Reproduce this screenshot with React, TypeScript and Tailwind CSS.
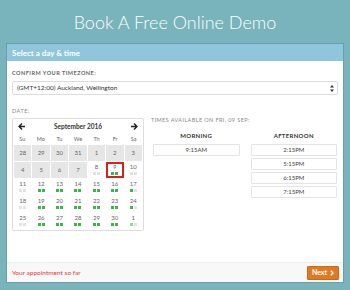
import React from 'react'

type Day = { n: number; bg?: boolean; dots?: string[]; selected?: boolean }

const G = '#3cb54a'
const L = '#e3e3e3'
const LG = '#93d59c'

const weeks: Day[][] = [
  [28, 29, 30, 31, 1, 2, 3].map((n) => ({ n, bg: true })),
  [
    { n: 4, bg: true },
    { n: 5, bg: true },
    { n: 6, bg: true },
    { n: 7, bg: true },
    { n: 8, dots: [L, L] },
    { n: 9, dots: [G, G], selected: true },
    { n: 10, dots: [L, L] },
  ],
  [
    { n: 11, dots: [L, L] },
    { n: 12, dots: [G, G] },
    { n: 13, dots: [G, G] },
    { n: 14, dots: [G, G] },
    { n: 15, dots: [G, G] },
    { n: 16, dots: [G, G] },
    { n: 17, dots: [G, L] },
  ],
  [
    { n: 18, dots: [L, L] },
    { n: 19, dots: [G, G] },
    { n: 20, dots: [G, G] },
    { n: 21, dots: [G, G] },
    { n: 22, dots: [G, G] },
    { n: 23, dots: [G, G] },
    { n: 24, dots: [G, L] },
  ],
  [
    { n: 25, dots: [L, L] },
    { n: 26, dots: [G, G] },
    { n: 27, dots: [G, G] },
    { n: 28, dots: [G, G] },
    { n: 29, dots: [G, G] },
    { n: 30, dots: [G, G] },
    { n: 1, dots: [LG, L] },
  ],
]

const Arrow = ({ dir }: { dir: 'left' | 'right' }) => (
  <svg width="7" height="7" viewBox="0 0 10 10" className={dir === 'right' ? 'rotate-180' : ''}>
    <path d="M9 5H2M5 1.5L1.5 5L5 8.5" fill="none" stroke="#222" strokeWidth="2" strokeLinecap="square" />
  </svg>
)

const Calendar = () => (
  <div className="w-[132px] border border-[#dedede] rounded-[2px] bg-white">
    <div className="h-[16px] flex items-center justify-between px-[5px]">
      <Arrow dir="left" />
      <span className="text-[6.5px] font-bold text-[#333]">September 2016</span>
      <Arrow dir="right" />
    </div>
    <div className="grid grid-cols-7 h-[10px] items-center text-center text-[5.5px] text-[#666]">
      {['Su', 'Mo', 'Tu', 'We', 'Th', 'Fr', 'Sa'].map((d) => (
        <span key={d}>{d}</span>
      ))}
    </div>
    <div className="flex flex-col gap-[1px] px-[1px] pb-[1px]">
      {weeks.map((w, i) => (
        <div key={i} className="grid grid-cols-7 gap-[1px] h-[16px]">
          {w.map((d, j) => (
            <div
              key={j}
              className={`flex flex-col items-center justify-center text-[6px] leading-none text-[#666] ${
                d.bg ? 'bg-[#e6e6e6]' : ''
              } ${d.selected ? 'border-2 border-[#d8201f]' : ''}`}
            >
              <span>{d.n}</span>
              {d.dots && (
                <div className="flex gap-[1px] mt-[2px]">
                  {d.dots.map((c, k) => (
                    <span key={k} className="block w-[3px] h-[3px]" style={{ backgroundColor: c }} />
                  ))}
                </div>
              )}
            </div>
          ))}
        </div>
      ))}
    </div>
  </div>
)

const Slot = ({ t }: { t: string }) => (
  <div className="h-[12px] border border-[#e4e4e4] rounded-[1px] flex items-center justify-center text-[6px] text-[#444]">
    {t}
  </div>
)

export default function App() {
  return (
    <div className="w-[350px] h-[290px] bg-[#79b3bb] overflow-hidden font-['Lato','Open_Sans',sans-serif]">
      <div className="h-[43px] flex items-center justify-center pt-[1px]">
        <h1 className="text-[18px] font-light text-white">Book A Free Online Demo</h1>
      </div>
      <div className="mx-[6px] h-[240px] border border-[#6a9fa7] bg-white flex flex-col">
        <div className="h-[17px] bg-[#8fc6db] flex items-center pl-[5px] text-white text-[8px] font-bold">
          Select a day &amp; time
        </div>
        <div className="flex-1 px-[5px] pt-[8px]">
          <div className="text-[5.5px] font-bold tracking-[0.5px] text-[#666]">CONFIRM YOUR TIMEZONE:</div>
          <div className="mt-[4px] h-[14px] border border-[#dcdcdc] rounded-[2px] flex items-center justify-between pl-[4px] pr-[3px] text-[6.5px] text-[#333]">
            <span>(GMT+12:00) Auckland, Wellington</span>
            <svg width="4" height="7" viewBox="0 0 4 7">
              <path d="M2 0L4 2.6H0Z M2 7L4 4.4H0Z" fill="#333" />
            </svg>
          </div>
          <div className="mt-[12px] text-[5.5px] tracking-[0.5px] text-[#888]">DATE:</div>
          <div className="mt-[2px] flex gap-[7px]">
            <Calendar />
            <div className="flex-1">
              <div className="text-[5.5px] tracking-[0.4px] text-[#888] mt-[-2px]">TIMES AVAILABLE ON FRI, 09 SEP:</div>
              <div className="mt-[8px] flex gap-[11px] pl-[2px] pr-[1px]">
                <div className="flex-1 flex flex-col">
                  <div className="text-center text-[6px] font-bold tracking-[0.3px] text-[#333] h-[8px] leading-[8px] mb-[4px]">MORNING</div>
                  <Slot t="9:15AM" />
                </div>
                <div className="flex-1 flex flex-col gap-[2px]">
                  <div className="text-center text-[6px] font-bold tracking-[0.3px] text-[#333] h-[8px] leading-[8px] mb-[2px]">AFTERNOON</div>
                  <Slot t="2:15PM" />
                  <Slot t="5:15PM" />
                  <Slot t="6:15PM" />
                  <Slot t="7:15PM" />
                </div>
              </div>
            </div>
          </div>
        </div>
        <div className="h-[20px] border-t border-[#ececec] bg-[#f8f8f8] flex items-center justify-between pl-[5px] pr-[4px]">
          <span className="text-[6.5px] text-[#e03a32]">Your appointment so far</span>
          <button className="h-[14px] w-[32px] bg-[#e07a22] border border-[#c96a18] rounded-[1px] text-white text-[7px] font-bold flex items-center justify-center gap-[3px]">
            Next
            <svg width="4" height="6" viewBox="0 0 4 6">
              <path d="M0.8 0.6L3 3L0.8 5.4" fill="none" stroke="#fff" strokeWidth="1.4" />
            </svg>
          </button>
        </div>
      </div>
    </div>
  )
}
